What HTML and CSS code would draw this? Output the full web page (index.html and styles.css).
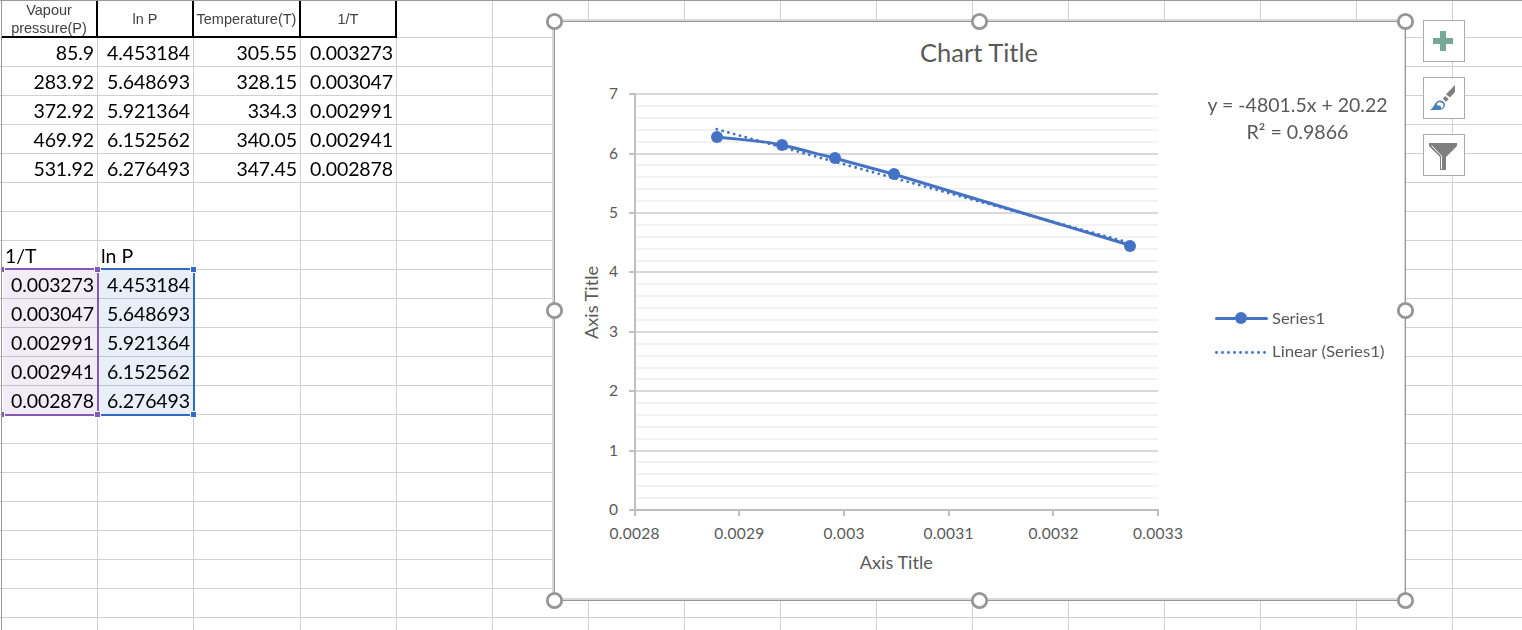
FILE: index.html
```
<!DOCTYPE html>
<html lang="en">
<head>
<meta charset="utf-8">
<title>Vapour pressure</title>
<link rel="stylesheet" href="styles.css">
</head>
<body>
<main class="sheet">
  <div class="table">
    <div class="head">Vapour<br>pressure(P)</div><div class="head">ln P</div><div class="head">Temperature(T)</div><div class="head">1/T</div>
    <div class="num">85.9</div><div class="num">4.453184</div><div class="num">305.55</div><div class="num">0.003273</div>
    <div class="num">283.92</div><div class="num">5.648693</div><div class="num">328.15</div><div class="num">0.003047</div>
    <div class="num">372.92</div><div class="num">5.921364</div><div class="num">334.3</div><div class="num">0.002991</div>
    <div class="num">469.92</div><div class="num">6.152562</div><div class="num">340.05</div><div class="num">0.002941</div>
    <div class="num">531.92</div><div class="num">6.276493</div><div class="num">347.45</div><div class="num">0.002878</div>
  </div>
  <div class="table second">
    <div class="label">1/T</div><div class="label">ln P</div><div></div><div></div>
    <div class="num">0.003273</div><div class="num">4.453184</div><div></div><div></div>
    <div class="num">0.003047</div><div class="num">5.648693</div><div></div><div></div>
    <div class="num">0.002991</div><div class="num">5.921364</div><div></div><div></div>
    <div class="num">0.002941</div><div class="num">6.152562</div><div></div><div></div>
    <div class="num">0.002878</div><div class="num">6.276493</div><div></div><div></div>
  </div>

  <svg class="ranges fills" width="200" height="160" viewBox="0 262 200 160" shape-rendering="crispEdges">
    <rect class="fill-x" x="3" y="270" width="94" height="144"/>
    <rect class="fill-y" x="99" y="270" width="94" height="144"/>
  </svg>
  <svg class="ranges" width="200" height="160" viewBox="0 262 200 160" shape-rendering="crispEdges">
    <path class="edge-x" d="M5 269H94M5 415H94M98 273V411"/>
    <path class="edge-y" d="M101 269H190M101 415H190M194 273V411"/>
    <path class="halo" d="M2 266h3v7h-3zM2 411h3v7h-3zM94 266h7v7h-7zM94 411h7v7h-7zM190 266h7v7h-7zM190 411h7v7h-7z"/>
    <g class="grip-x"><rect x="2" y="267" width="2" height="5"/><rect x="2" y="412" width="2" height="5"/><rect x="95" y="267" width="5" height="5"/><rect x="95" y="412" width="5" height="5"/></g>
    <g class="grip-y"><rect x="191" y="267" width="5" height="5"/><rect x="191" y="412" width="5" height="5"/></g>
  </svg>

  <svg class="chart" width="874" height="600" viewBox="540 10 874 600">
    <g shape-rendering="crispEdges">
      <rect class="frame-soft" x="552" y="19" width="853" height="581"/>
      <rect class="frame" x="554" y="21" width="852" height="580"/>
      <rect class="frame-soft" x="555" y="22" width="850" height="578"/>
      <rect class="paper" x="555" y="22" width="849" height="576"/>
      <path class="minor" d="M636 498H1158M636 486H1158M636 474H1158M636 462H1158M636 439H1158M636 427H1158M636 415H1158M636 403H1158M636 379H1158M636 368H1158M636 356H1158M636 344H1158M636 320H1158M636 308H1158M636 296H1158M636 284H1158M636 261H1158M636 249H1158M636 237H1158M636 225H1158M636 201H1158M636 189H1158M636 177H1158M636 165H1158M636 142H1158M636 130H1158M636 118H1158M636 106H1158"/>
      <path class="major" d="M636 451H1158M636 391H1158M636 332H1158M636 272H1158M636 213H1158M636 154H1158M636 94H1158"/>
      <path class="axis" d="M635 93V516M629 510H1159M629 451h6M629 391h6M629 332h6M629 272h6M629 213h6M629 154h6M629 94h6M739 510v6M844 510v6M949 510v6M1053 510v6M1158 510v6"/>
    </g>

    <path class="trend" d="M716.8 129.3L1130 243"/>
    <path class="series" d="M717 137C739 139.600 762 140.500 782 145C800 149 817 154 835 158.200C855 163.500 874 169 894 174.300L1130 245.300"/>
    <g class="dot"><circle cx="717" cy="137" r="6"/><circle cx="782" cy="145" r="6"/><circle cx="835" cy="158" r="6"/><circle cx="894" cy="174" r="6"/><circle cx="1130" cy="246" r="6"/></g>

    <g class="tick">
      <text x="613.500" y="515">0</text><text x="613.500" y="456">1</text><text x="613.500" y="396">2</text><text x="613.500" y="337">3</text><text x="613.500" y="277">4</text><text x="613.500" y="218">5</text><text x="613.500" y="159">6</text><text x="613.500" y="99">7</text>
      <text x="634.500" y="539" textLength="50">0.0028</text><text x="739.300" y="539" textLength="50">0.0029</text><text x="844" y="539" textLength="41">0.003</text><text x="948.500" y="539" textLength="50">0.0031</text><text x="1053.500" y="539" textLength="50">0.0032</text><text x="1158" y="539" textLength="50">0.0033</text>
    </g>
    <text class="title" x="979" y="62" textLength="118" lengthAdjust="spacingAndGlyphs">Chart Title</text>
    <text class="caption" x="896.300" y="569" textLength="73" lengthAdjust="spacingAndGlyphs">Axis Title</text>
    <text class="caption" transform="translate(598 302.500) rotate(-90)" textLength="73" lengthAdjust="spacingAndGlyphs">Axis Title</text>
    <text class="equation" x="1297.500" y="112" textLength="180" lengthAdjust="spacingAndGlyphs">y = -4801.5x + 20.22</text>
    <text class="equation" x="1297.500" y="139" textLength="102" lengthAdjust="spacingAndGlyphs">R² = 0.9866</text>

    <path class="series" d="M1216.500 318.500H1266.500"/>
    <circle class="dot" cx="1241" cy="318" r="6"/>
    <path class="trend" d="M1216.500 352.500H1266"/>
    <text class="legend" x="1272" y="324" textLength="53" lengthAdjust="spacingAndGlyphs">Series1</text>
    <text class="legend" x="1272" y="357" textLength="112.500" lengthAdjust="spacingAndGlyphs">Linear (Series1)</text>

    <g class="handle"><circle cx="554.500" cy="21.500" r="7.200"/><circle cx="979.500" cy="21.500" r="7.200"/><circle cx="1405.500" cy="21.500" r="7.200"/><circle cx="554.500" cy="310.500" r="7.200"/><circle cx="1405.500" cy="310.500" r="7.200"/><circle cx="554.500" cy="600.500" r="7.200"/><circle cx="979.500" cy="600.500" r="7.200"/><circle cx="1405.500" cy="600.500" r="7.200"/></g>
  </svg>

  <nav class="tools">
    <button class="tool" aria-label="Chart elements"><svg width="40" height="40"><path fill="#76a797" d="M16 10h6v7h7v6h-7v7h-6v-7H9v-6h7z"/></svg></button>
    <button class="tool" aria-label="Chart styles"><svg width="40" height="40"><path fill="#7f7f7f" d="M31 7V14L26 19.500L22 16.200Z"/><path fill="#7f7f7f" d="M21.300 18L24.800 21.300L22 23.700L18.800 20.800Z"/><path fill="#4a7ebb" d="M6 32C10 29.500 10 26 13 23.500C16 21.500 20.500 23 21 26.500C21.300 30 18 32 14 32Z"/><path fill="#fff" d="M13 25.500C14.500 23.700 18.500 24 19.500 26.500C20 28.500 18.500 30 17 30.500C17.500 28.500 16.500 27.500 14.500 27.500C13 27.500 12.500 27 13 25.500Z"/></svg></button>
    <button class="tool" aria-label="Chart filters"><svg width="40" height="40"><path fill="#7f7f7f" d="M5 8H33V11L22 22V35H16V22L5 11Z"/><path fill="none" stroke="#fff" d="M7.500 10.500L17.500 21V34"/></svg></button>
  </nav>
</main>
</body>
</html>
```
FILE: styles.css
```
body {
  margin: 0;
  background: #fff;
}

.sheet {
  --rule: #d0d0d0;
  position: relative;
  box-sizing: border-box;
  width: 1522px;
  height: 630px;
  padding: 1px 0 0 2px;
  overflow: hidden;
  font-family: Lato, "Noto Sans", sans-serif;
  background:
    linear-gradient(#999, #999) 0 0 / 100% 1px no-repeat,
    linear-gradient(#999, #999) 1px 0 / 1px 100% no-repeat,
    linear-gradient(var(--rule), var(--rule)) 97px 0 / 1px 100% no-repeat,
    linear-gradient(var(--rule), var(--rule)) 193px 0 / 1px 100% no-repeat,
    repeating-linear-gradient(to right, var(--rule) 0 1px, transparent 1px 96px) 300px 0 / 1222px 100% no-repeat,
    repeating-linear-gradient(var(--rule) 0 1px, transparent 1px 29px) 0 37px / 100% 593px no-repeat,
    #fff;
}

.table {
  display: grid;
  grid-template-columns: 96px 96px 107px 96px;
  grid-template-rows: 37px;
  grid-auto-rows: 29px;
  width: 395px;
}

.second {
  grid-template-rows: 29px;
  margin-top: 58px;
}

.head {
  display: flex;
  align-items: center;
  justify-content: center;
  border: solid #000;
  border-width: 0 2px 2px 0;
  font: 14.5px/18px "Liberation Sans", sans-serif;
  text-align: center;
  color: #404040;
}

.num,
.label {
  font-size: 19.5px;
  line-height: 29px;
  color: #000;
  white-space: nowrap;
}

.num {
  padding-right: 4px;
  letter-spacing: -0.1px;
  text-align: right;
}

.label {
  padding-left: 3px;
}

.ranges {
  position: absolute;
  left: 0;
  top: 262px;
}

.fills { mix-blend-mode: multiply; }
.fill-x { fill: #f1ecf6; }
.fill-y { fill: #e8eff9; }
.halo { fill: #fff; }
.edge-x { fill: none; stroke: #8558b7; stroke-width: 2; }
.edge-y { fill: none; stroke: #316ac5; stroke-width: 2; }
.grip-x { fill: #8558b7; }
.grip-y { fill: #316ac5; }

.chart {
  position: absolute;
  left: 540px;
  top: 10px;
}

.frame-soft { fill: #d9d9d9; }
.frame { fill: #969696; }
.paper { fill: #fff; }
.minor { stroke: #f2f2f2; stroke-width: 2; }
.major { stroke: #d9d9d9; stroke-width: 2; }
.axis { fill: none; stroke: #bfbfbf; stroke-width: 2; }

.series {
  fill: none;
  stroke: #4472c4;
  stroke-width: 3;
  stroke-linecap: round;
}

.trend {
  fill: none;
  stroke: #4472c4;
  stroke-width: 2.9;
  stroke-linecap: round;
  stroke-dasharray: 0 6;
}

.dot { fill: #4472c4; }

.chart text {
  fill: #595959;
  text-anchor: middle;
}

.tick { font-size: 15.5px; }
.title { font-size: 25px; }
.caption { font-size: 18px; }
.equation { font-size: 19.5px; }
.chart .legend { font-size: 15.5px; text-anchor: start; }
.handle { fill: #fff; stroke: #969696; stroke-width: 2.8; }

.tools {
  position: absolute;
  left: 1423px;
  top: 20px;
  display: flex;
  flex-direction: column;
  gap: 15px;
}

.tool {
  display: block;
  width: 42px;
  height: 42px;
  padding: 0;
  border: 1px solid #ababab;
  background: #fff;
}

.tool svg { display: block; }
```
